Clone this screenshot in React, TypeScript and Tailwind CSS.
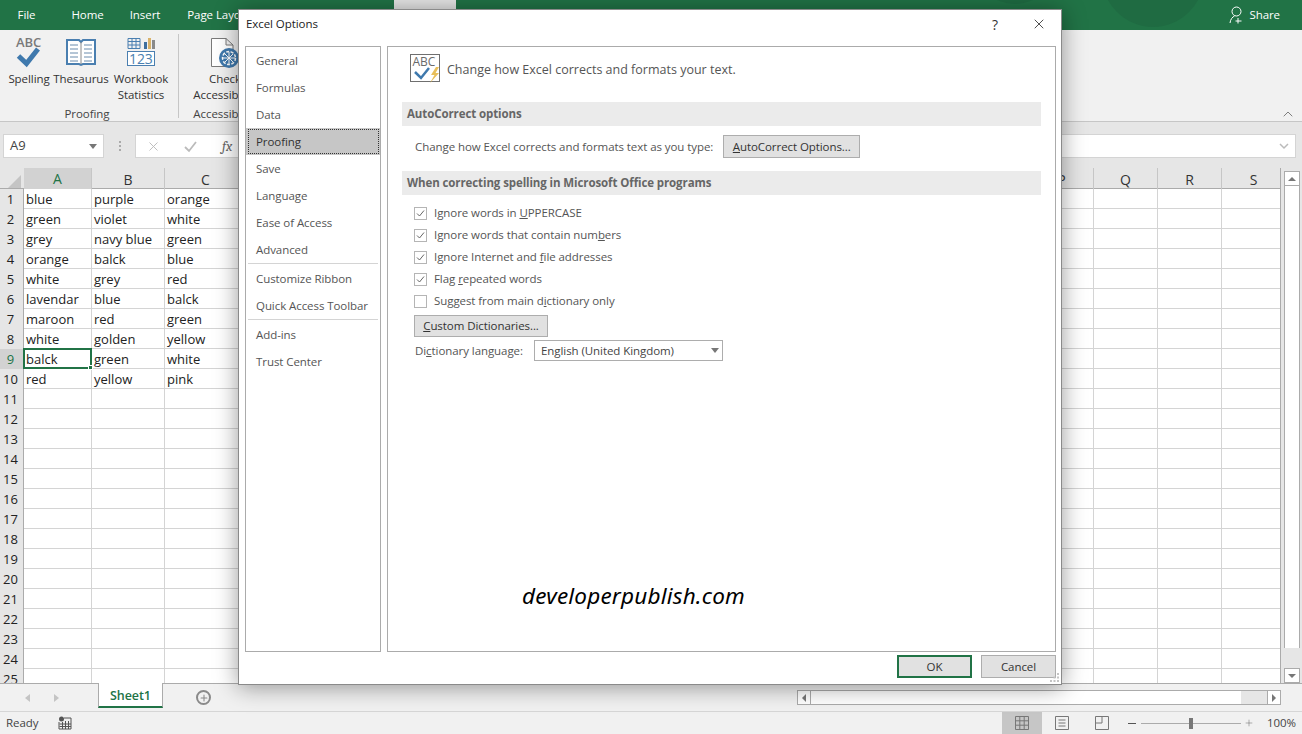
import { ChevronUp, Plus, X } from "lucide-react"

const font = { fontFamily: '"Open Sans", "Noto Sans", sans-serif' }

const columns = ["A", "B", "C", "D", "E", "F", "G", "H", "I", "J", "K", "L", "M", "N", "O", "P", "Q", "R", "S"]
const hiddenColumns = ["D", "E", "F", "G", "H", "I", "J", "K", "L", "M", "N", "O"]

const cells = [
  ["blue", "purple", "orange"],
  ["green", "violet", "white"],
  ["grey", "navy blue", "green"],
  ["orange", "balck", "blue"],
  ["white", "grey", "red"],
  ["lavendar", "blue", "balck"],
  ["maroon", "red", "green"],
  ["white", "golden", "yellow"],
  ["balck", "green", "white"],
  ["red", "yellow", "pink"],
]

const rows = Array.from({ length: 25 }, (_, i) => i + 1)

const gridCols = "grid grid-cols-[24px_68px_73px_82px_68px_repeat(11,65px)_64px_64px_64px_64px] w-[1286px]"

function SpellingIcon() {
  return (
    <svg width="32" height="34" viewBox="0 0 32 34" className="overflow-visible">
      <text x="3" y="11" fontSize="13" fontWeight="600" fill="#7a7a7a" fontFamily="Open Sans">ABC</text>
      <path d="M5.500 20 L13.500 27.500 L25 13" fill="none" stroke="#3f79ad" strokeWidth="5" />
    </svg>
  )
}

function ThesaurusIcon() {
  return (
    <svg width="34" height="34" viewBox="0 0 34 34">
      <path d="M3 4 H15 L17 6 L19 4 H31 V28 H19 L17 29 L15 28 H3 Z" fill="#fff" stroke="#4a7fb0" strokeWidth="2" />
      <path d="M17 6 V28" stroke="#8a8a8a" strokeWidth="1" />
      <path d="M6 9 H14 M6 13 H14 M6 17 H14 M6 21 H14 M6 25 H14 M20 9 H28 M20 13 H28 M20 17 H28 M20 21 H28 M20 25 H28" stroke="#6a8cad" strokeWidth="1" />
    </svg>
  )
}

function StatsIcon() {
  return (
    <svg width="30" height="34" viewBox="0 0 30 34">
      <path d="M2 2.500 H14 V12.500 H2 Z M2 5.500 H14 M2 9 H14 M6 2.500 V12.500 M10 2.500 V12.500" fill="none" stroke="#4a7fb0" strokeWidth="1" />
      <rect x="18" y="6" width="3" height="7" fill="#3f6f9e" />
      <rect x="22" y="2" width="3" height="11" fill="#d9b26a" />
      <rect x="26" y="4" width="3" height="9" fill="#8a8a8a" />
      <rect x="1.500" y="15.500" width="27" height="14" fill="#fff" stroke="#4a7fb0" />
      <text x="3" y="27.500" fontSize="14" fill="#4a7fb0" fontFamily="Open Sans">123</text>
    </svg>
  )
}

function AccessibilityIcon() {
  return (
    <svg width="34" height="34" viewBox="0 0 34 34">
      <path d="M3.500 2.500 H18 L25 9 V30.500 H3.500 Z M18 2.500 V9 H25" fill="#fff" stroke="#7a7a7a" />
      <circle cx="21" cy="22" r="10" fill="#3f79ad" />
      <circle cx="21" cy="22" r="6.500" fill="none" stroke="#fff" strokeWidth="1.500" strokeDasharray="3 1.500" />
      <path d="M21 16 V28 M15 22 H27 M16.800 17.800 L25.200 26.200 M25.200 17.800 L16.800 26.200" stroke="#fff" strokeWidth="1" />
    </svg>
  )
}

function ProofingIcon() {
  return (
    <svg width="31" height="30" viewBox="0 0 31 30">
      <rect x="0.500" y="0.500" width="29" height="27" fill="#fff" stroke="#6f6f6f" />
      <text x="2.500" y="12" fontSize="12" fill="#6a6a6a" fontFamily="Open Sans">ABC</text>
      <path d="M5 18 L11 24 L19 14" fill="none" stroke="#3f79ad" strokeWidth="2.500" />
      <path d="M26 13 L21 21 H24.500 L20 29 L29 19 H25.500 L29 13 Z" fill="#e8bf5a" />
    </svg>
  )
}

function RibbonButton({ icon, label, width }: { icon: React.ReactNode; label: string[]; width: string }) {
  return (
    <div className={`flex flex-col items-center ${width}`}>
      <div className="h-[35px] flex items-start justify-center">{icon}</div>
      {label.map((line) => (
        <span key={line} className="leading-[16px] whitespace-nowrap">{line}</span>
      ))}
    </div>
  )
}

function Check({ checked, children }: { checked?: boolean; children: React.ReactNode }) {
  return (
    <div className="h-[22px] flex items-center gap-[7px] pl-[26px]">
      <span className="w-[13px] h-[13px] border border-[#b5b5b5] bg-white flex items-center justify-center">
        {checked && (
          <svg width="9" height="9" viewBox="0 0 9 9">
            <path d="M1 4.500 L3.500 7 L8 1.500" fill="none" stroke="#666" strokeWidth="1" />
          </svg>
        )}
      </span>
      <span>{children}</span>
    </div>
  )
}

function NavItem({ label, active }: { label: string; active?: boolean }) {
  return (
    <div className={`h-[27px] flex items-center pl-[10px] ${active ? "bg-[#c6c6c6] text-[#333]" : ""}`}>
      {active ? (
        <div className="mx-[1px] -ml-[8px] pl-[7px] w-[133px] h-[25px] flex items-center border border-dotted border-[#333]">{label}</div>
      ) : label}
    </div>
  )
}

function SectionBar({ children }: { children: React.ReactNode }) {
  return (
    <div className="ml-[14px] mr-[14px] h-[24px] bg-[#ebebeb] flex items-center pl-[5px] font-bold text-[#666] tracking-[-0.1px]">
      {children}
    </div>
  )
}

function OptionsDialog() {
  return (
    <div className="absolute left-[238px] top-[9px] w-[824px] h-[676px] bg-white border border-[#8a8a8a] shadow-[0_2px_22px_rgba(0,0,0,0.4)] flex flex-col text-[#555]">
      <div className="h-[36px] shrink-0 flex items-center pl-[7px] pb-[8px] text-[#222]">
        <span>Excel Options</span>
        <span className="ml-auto mr-[33px] text-[14px] text-[#333]">?</span>
        <X size={16} strokeWidth={1.2} className="mr-[14px] text-[#222]" />
      </div>

      <div className="flex gap-[6px] pl-[6px] pr-[5px]">
        <div className="w-[136px] h-[606px] border border-[#ababab]">
          <NavItem label="General" />
          <NavItem label="Formulas" />
          <NavItem label="Data" />
          <NavItem label="Proofing" active />
          <NavItem label="Save" />
          <NavItem label="Language" />
          <NavItem label="Ease of Access" />
          <NavItem label="Advanced" />
          <div className="h-[1px] bg-[#d4d4d4] mx-[2px] mb-[1px]" />
          <NavItem label="Customize Ribbon" />
          <NavItem label="Quick Access Toolbar" />
          <div className="h-[1px] bg-[#d4d4d4] mx-[2px] mb-[1px]" />
          <NavItem label="Add-ins" />
          <NavItem label="Trust Center" />
        </div>

        <div className="w-[670px] h-[606px] border border-[#ababab]">
          <div className="h-[30px] mt-[7px] ml-[22px] flex items-center gap-[6px] text-[12.5px] tracking-normal">
            <ProofingIcon />
            <span className="pt-[2px]">Change how Excel corrects and formats your text.</span>
          </div>
          <div className="h-[18px]" />
          <SectionBar>AutoCorrect options</SectionBar>
          <div className="mt-[9px] ml-[27px] h-[23px] flex items-center gap-[10px]">
            <span>Change how Excel corrects and formats text as you type:</span>
            <button className="w-[137px] h-[23px] bg-[#e1e1e1] border border-[#adadad] text-[#333]" style={font}>
              <u>A</u>utoCorrect Options...
            </button>
          </div>
          <div className="h-[13px]" />
          <SectionBar>When correcting spelling in Microsoft Office programs</SectionBar>
          <div className="mt-[7px]">
            <Check checked>Ignore words in <u>U</u>PPERCASE</Check>
            <Check checked>Ignore words that contain num<u>b</u>ers</Check>
            <Check checked>Ignore Internet and <u>f</u>ile addresses</Check>
            <Check checked>Flag <u>r</u>epeated words</Check>
            <Check>Suggest from main d<u>i</u>ctionary only</Check>
          </div>
          <button className="mt-[3px] ml-[26px] block w-[134px] h-[22px] bg-[#e1e1e1] border border-[#adadad] text-[#333]" style={font}>
            <u>C</u>ustom Dictionaries...
          </button>
          <div className="mt-[3px] ml-[27px] h-[21px] flex items-center gap-[10px]">
            <span className="w-[109px] whitespace-nowrap">Di<u>c</u>tionary language:</span>
            <div className="w-[189px] h-[21px] border border-[#adadad] flex items-center pl-[6px] text-[#444]">
              <span>English (United Kingdom)</span>
              <span className="ml-auto mr-[3px] w-0 h-0 border-x-[4px] border-x-transparent border-t-[5px] border-t-[#777]" />
            </div>
          </div>
          <div className="mt-[220px] ml-[134px] text-[22.5px] leading-[30px] italic text-black tracking-[0.2px]" style={{ fontFamily: '"Noto Sans", sans-serif' }}>
            developerpublish.com
          </div>
        </div>
      </div>

      <div className="flex justify-end gap-[9px] pt-[3px] pr-[5px]">
        <button className="w-[75px] h-[23px] bg-[#e1e1e1] border-2 border-[#217346] text-[#333]" style={font}>OK</button>
        <button className="w-[75px] h-[23px] bg-[#e1e1e1] border border-[#adadad] text-[#333]" style={font}>Cancel</button>
      </div>

      <svg className="absolute right-[1px] bottom-[1px]" width="11" height="11" viewBox="0 0 11 11">
        <path d="M8 1h2v2H8zM8 4.500h2v2H8zM4.500 4.500h2v2h-2zM8 8h2v2H8zM4.500 8h2v2h-2zM1 8h2v2H1z" fill="#c4c4c4" />
      </svg>
    </div>
  )
}

export default function App() {
  return (
    <div className="relative w-[1302px] h-[734px] overflow-hidden bg-[#f1f1f1] flex flex-col text-[11.5px] tracking-[-0.07px] text-[#333]" style={font}>
      {/* title and tabs */}
      <div className="relative h-[30px] shrink-0 bg-[#217346] overflow-hidden flex text-white">
        <svg className="absolute left-[960px] top-0" width="260" height="30" viewBox="0 0 260 30">
          <circle cx="55" cy="-38" r="42" fill="#1f6b42" />
          <circle cx="193" cy="-24" r="51" fill="#1f6b42" />
        </svg>
        <div className="w-[53px] h-[30px] flex items-center justify-center">File</div>
        <div className="w-[69px] h-[30px] flex items-center justify-center">Home</div>
        <div className="w-[46px] h-[30px] flex items-center justify-center">Insert</div>
        <div className="w-[103px] h-[30px] flex items-center justify-center whitespace-nowrap">Page Layout</div>
        <div className="w-[123px] h-[30px]" />
        <div className="w-[62px] h-[30px] bg-[#e6e6e6]" />
        <div className="relative ml-auto mr-[22px] h-[30px] flex items-center gap-[4px]">
          <svg width="16" height="18" viewBox="0 0 16 18" fill="none" stroke="#fff" strokeWidth="1">
            <circle cx="7.500" cy="5.500" r="4.500" />
            <path d="M1 17 C1.500 13 3.500 11 5.500 10 M9 12 V17.500 M6.500 15 H12.500" />
          </svg>
          <span>Share</span>
        </div>
      </div>

      {/* ribbon */}
      <div className="relative h-[92px] shrink-0 flex pl-[3px] pt-[6px] border-b border-[#c6c6c6]">
        <div className="w-[172px] flex flex-col -mb-[1px]">
          <div className="flex flex-1">
            <RibbonButton width="w-[52px]" icon={<SpellingIcon />} label={["Spelling"]} />
            <RibbonButton width="w-[52px]" icon={<ThesaurusIcon />} label={["Thesaurus"]} />
            <RibbonButton width="w-[68px]" icon={<StatsIcon />} label={["Workbook", "Statistics"]} />
          </div>
          <div className="h-[16px] leading-[16px] text-center text-[#444] pr-[4px]">Proofing</div>
        </div>
        <div className="w-[1px] h-[84px] -mt-[2px] ml-[3px] bg-[#c6c6c6]" />
        <div className="w-[88px] ml-[2px] flex flex-col -mb-[1px]">
          <div className="flex flex-1">
            <RibbonButton width="w-[88px]" icon={<AccessibilityIcon />} label={["Check", "Accessibility"]} />
          </div>
          <div className="h-[16px] leading-[16px] text-center text-[#444]">Accessibility</div>
        </div>
        <ChevronUp size={16} strokeWidth={1} className="absolute right-[6px] bottom-[-1px] text-[#444]" />
      </div>

      {/* formula bar */}
      <div className="h-[46px] shrink-0 bg-[#e6e6e6] flex pt-[12px] pl-[3px] pr-[6px]">
        <div className="w-[101px] h-[24px] bg-white border border-[#d4d4d4] flex items-center pl-[6px] pr-[6px] text-[13px] text-[#444]">
          <span>A9</span>
          <span className="ml-auto w-0 h-0 border-x-[4px] border-x-transparent border-t-[5px] border-t-[#777]" />
        </div>
        <div className="w-[31px] h-[24px] flex items-center justify-center">
          <span className="w-[2px] h-[10px] border-l-2 border-dotted border-[#aaa]" />
        </div>
        <div className="flex-1 h-[24px] bg-white border border-[#d4d4d4] flex items-center pr-[6px]">
          <X size={15} strokeWidth={1.5} className="ml-[10px] text-[#bbb]" />
          <svg className="ml-[22px]" width="15" height="15" viewBox="0 0 15 15">
            <path d="M2 8 L6 12 L13 3" fill="none" stroke="#bbb" strokeWidth="1.800" />
          </svg>
          <span className="ml-[24px] italic font-serif text-[14px] text-[#666]">fx</span>
          <svg className="ml-auto" width="10" height="8" viewBox="0 0 10 8">
            <path d="M1 2 L5 6 L9 2" fill="none" stroke="#bbb" strokeWidth="1.500" />
          </svg>
        </div>
      </div>

      {/* sheet */}
      <div className="flex h-[515px] shrink-0 bg-[#e6e6e6] tracking-normal">
        <div className="relative w-[1281px] overflow-hidden border-r border-[#ababab]">
          <div className={`${gridCols} h-[21px] border-b border-[#ababab] text-[14px]`}>
            <div className="relative">
              <span className="absolute right-[3px] bottom-[2px] w-0 h-0 border-l-[13px] border-l-transparent border-b-[13px] border-b-[#c4c4c4]" />
            </div>
            {columns.map((c) => (
              <div key={c} className={`flex items-center justify-center border-r border-[#c6c6c6] ${c === "A" ? "bg-[#d2d2d2] text-[#217346] border-b-2 border-b-[#217346] -mb-[1px]" : ""}`}>
                {hiddenColumns.includes(c) ? "" : c}
              </div>
            ))}
          </div>
          {rows.map((r) => (
            <div key={r} className={`${gridCols} h-[20px] text-[13px] text-[#222]`}>
              <div className={`h-[20px] flex items-center justify-center pr-[2px] pt-[1px] border-r border-[#ababab] ${r === 9 ? "bg-[#d2d2d2] text-[#217346]" : "bg-[#e6e6e6]"}`}>{r}</div>
              {columns.map((c, i) => (
                <div key={c} className="h-[20px] bg-white border-r border-b border-[#d4d4d4] pl-[2px] pt-[1px] leading-[18px] whitespace-nowrap overflow-hidden">
                  {i < 3 && cells[r - 1] ? cells[r - 1][i] : ""}
                </div>
              ))}
            </div>
          ))}
          <div className="absolute left-[23px] top-[180px] w-[69px] h-[21px] border-2 border-[#217346]">
            <span className="absolute -right-[3px] -bottom-[3px] w-[5px] h-[5px] bg-[#217346] border border-white" />
          </div>
        </div>
        <div className="w-[21px] pl-[3px] pr-[2px] pt-[3px] flex flex-col">
          <div className="h-[15px] bg-white border border-[#ababab] flex items-center justify-center">
            <span className="w-0 h-0 border-x-[4px] border-x-transparent border-b-[4px] border-b-[#777]" />
          </div>
          <div className="h-[462px] bg-white border-x border-[#ababab]" />
          <div className="flex-1" />
          <div className="h-[15px] bg-white border border-[#ababab] flex items-center justify-center">
            <span className="w-0 h-0 border-x-[4px] border-x-transparent border-t-[4px] border-t-[#777]" />
          </div>
        </div>
      </div>

      {/* sheet tabs */}
      <div className="h-[28px] shrink-0 bg-[#f1f1f1] border-t border-[#ababab] flex items-start">
        <span className="ml-[25px] mt-[10px] w-0 h-0 border-y-[4px] border-y-transparent border-r-[5px] border-r-[#c4c4c4]" />
        <span className="ml-[24px] mt-[10px] w-0 h-0 border-y-[4px] border-y-transparent border-l-[5px] border-l-[#c4c4c4]" />
        <div className="ml-[39px] -mt-[1px] pt-[3px] w-[65px] h-[25px] bg-white border-x border-[#ababab] border-b-2 border-b-[#217346] flex items-center justify-center font-semibold text-[#217346] text-[12.5px]">
          Sheet1
        </div>
        <span className="ml-[33px] mt-[6px] w-[15px] h-[15px] rounded-full border-2 border-[#8a8a8a] flex items-center justify-center">
          <Plus size={10} strokeWidth={2.500} className="text-[#8a8a8a]" />
        </span>
        <div className="ml-auto mr-[21px] mt-[6px] w-[484px] h-[15px] flex">
          <div className="w-[14px] bg-white border border-[#ababab] flex items-center justify-center">
            <span className="w-0 h-0 border-y-[4px] border-y-transparent border-r-[4px] border-r-[#777]" />
          </div>
          <div className="w-[430px] bg-white border-y border-[#ababab]" />
          <div className="flex-1 bg-[#e6e6e6] border-y border-[#ababab]" />
          <div className="w-[14px] bg-white border border-[#ababab] flex items-center justify-center">
            <span className="w-0 h-0 border-y-[4px] border-y-transparent border-l-[4px] border-l-[#777]" />
          </div>
        </div>
      </div>

      {/* status bar */}
      <div className="flex-1 border-t border-[#d6d6d6] flex items-center text-[#444]">
        <span className="ml-[6px]">Ready</span>
        <svg className="ml-[20px]" width="14" height="14" viewBox="0 0 14 14">
          <circle cx="3.500" cy="3" r="2.500" fill="#555" />
          <path d="M6 2 H13 V13 H1 V6 M1.500 8 H13 M1.500 10.500 H13 M4.500 6 V13 M7.500 5 V13 M10.500 5 V13" fill="none" stroke="#555" />
        </svg>
        <div className="ml-auto w-[40px] h-[22px] bg-[#c6c6c6] flex items-center justify-center">
          <svg width="14" height="14" viewBox="0 0 14 14">
            <path d="M.5 .5 H13.500 V13.500 H.5 Z M.5 4.800 H13.500 M.5 9.200 H13.500 M4.800 .5 V13.500 M9.200 .5 V13.500" fill="none" stroke="#777" />
          </svg>
        </div>
        <div className="w-[40px] flex justify-center">
          <svg width="14" height="14" viewBox="0 0 14 14">
            <path d="M.5 .5 H13.500 V13.500 H.5 Z M3.500 4 H10.500 M3.500 7 H10.500 M3.500 10 H10.500" fill="none" stroke="#777" />
          </svg>
        </div>
        <div className="w-[40px] flex justify-center">
          <svg width="14" height="14" viewBox="0 0 14 14">
            <path d="M.5 .5 H13.500 V13.500 H.5 Z M7 .5 V7 M.5 7 H7" fill="none" stroke="#777" />
          </svg>
        </div>
        <span className="ml-[6px] w-[8px] h-[1px] bg-[#555]" />
        <div className="relative ml-[5px] w-[100px] h-[1px] bg-[#ababab]">
          <span className="absolute left-[48px] -top-[5px] w-[4px] h-[11px] bg-[#777]" />
        </div>
        <Plus size={10} strokeWidth={1} className="ml-[3px] text-[#444]" />
        <span className="ml-[13px] w-[27px] mr-[8px] whitespace-nowrap">100%</span>
      </div>

      <OptionsDialog />
    </div>
  )
}
